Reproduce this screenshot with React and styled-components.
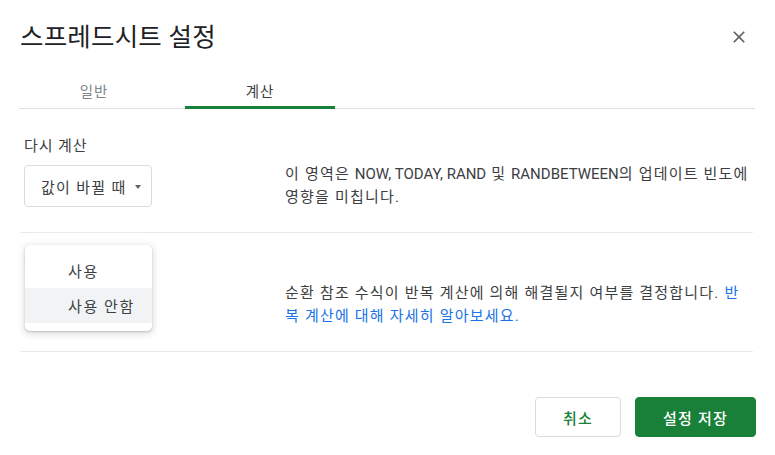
import React from "react";
import styled, { createGlobalStyle } from "styled-components";

const GlobalStyle = createGlobalStyle`
  html, body {
    margin: 0;
    padding: 0;
    background: #ffffff;
  }
  body {
    font-family: Roboto, "Noto Sans CJK KR", "Noto Sans", sans-serif;
    color: #3c4043;
  }
  * { box-sizing: border-box; }
`;

const Dialog = styled.div`
  width: 775px;
  height: 455px;
  padding: 0 20px;
  background: #fff;
  overflow: hidden;
`;

const Header = styled.div`
  height: 73px;
  display: flex;
  align-items: center;
  justify-content: space-between;
`;

const Title = styled.h1`
  margin: 0;
  font-size: 25.5px;
  line-height: 30px;
  letter-spacing: 0.2px;
  font-weight: 400;
  color: #202124;
`;

const CloseButton = styled.button`
  width: 20px;
  height: 20px;
  padding: 0;
  margin-right: 6px;
  border: 0;
  background: transparent;
  color: #5f6368;
  display: flex;
  align-items: center;
  justify-content: center;
  cursor: pointer;
`;

const TabBar = styled.div`
  display: flex;
  gap: 16px;
  margin-left: -1px;
  border-bottom: 1px solid #e0e0e0;
`;

const Tab = styled.div`
  width: 150px;
  height: 36px;
  margin-bottom: -1px;
  display: flex;
  align-items: center;
  justify-content: center;
  font-size: 14.5px;
  letter-spacing: 0.8px;
  color: ${(p) => (p.$active ? "#3c4043" : "#80868b")};
  border-bottom: 3px solid ${(p) => (p.$active ? "#188038" : "transparent")};
  padding-top: 1px;
`;

const Panel = styled.div`
  padding-top: 5px;
`;

const Section = styled.div`
  display: grid;
  grid-template-columns: 240px 1fr;
  grid-template-rows: 20px 42px;
  column-gap: 21px;
  row-gap: 9px;
  padding: 22px 0 25px 4px;
  margin-right: 2px;
  border-bottom: 1px solid #e8eaed;
`;

const Label = styled.div`
  grid-column: 1;
  font-size: 15px;
  line-height: 20px;
  letter-spacing: 0.9px;
  color: #3c4043;
  white-space: nowrap;
`;

const SelectWrap = styled.div`
  grid-column: 1;
  grid-row: 2;
  position: relative;
`;

const Select = styled.div`
  width: 128px;
  height: 42px;
  display: flex;
  align-items: center;
  justify-content: space-between;
  padding: 0 10px 0 16px;
  border: 1px solid #dadce0;
  border-radius: 4px;
  font-size: 15px;
  letter-spacing: 1.3px;
  color: #3c4043;
  white-space: nowrap;
  visibility: ${(p) => (p.$hidden ? "hidden" : "visible")};
`;

const Caret = styled.span`
  width: 0;
  height: 0;
  border-left: 3.5px solid transparent;
  border-right: 3.5px solid transparent;
  border-top: 4px solid #5f6368;
  margin-top: 1px;
`;

const Description = styled.div`
  grid-column: 2;
  grid-row: 2;
  align-self: center;
  margin-right: -1px;
  font-size: 15px;
  line-height: 23px;
  letter-spacing: 1.2px;
  color: #3c4043;
`;

const FnName = styled.span`
  letter-spacing: 0;
`;

const Link = styled.a`
  color: #1a73e8;
  text-decoration: none;
`;

const Menu = styled.div`
  position: absolute;
  top: -39px;
  left: 1px;
  width: 127px;
  padding: 8px 0;
  background: #fff;
  border-radius: 5px;
  box-shadow: 0 1px 2px rgba(60, 64, 67, 0.25), 0 2px 6px 2px rgba(60, 64, 67, 0.13);
  z-index: 2;
`;

const MenuItem = styled.div`
  height: 35px;
  display: flex;
  align-items: center;
  padding-left: 43px;
  font-size: 15px;
  letter-spacing: 1.6px;
  color: #3c4043;
  background: ${(p) => (p.$highlight ? "#f1f3f4" : "transparent")};
`;

const Footer = styled.div`
  display: flex;
  justify-content: flex-end;
  gap: 14px;
  padding-top: 45px;
  margin-right: -1px;
`;

const Button = styled.button`
  height: 40px;
  width: ${(p) => (p.$primary ? "121px" : "86px")};
  border-radius: 4px;
  font-family: inherit;
  font-size: 15px;
  font-weight: 500;
  letter-spacing: 1.2px;
  cursor: pointer;
  border: 1px solid ${(p) => (p.$primary ? "#188038" : "#dadce0")};
  background: ${(p) => (p.$primary ? "#188038" : "#ffffff")};
  color: ${(p) => (p.$primary ? "#ffffff" : "#188038")};
`;

function CloseIcon() {
  return (
    <svg width="20" height="20" viewBox="0 0 24 24" fill="currentColor">
      <path d="M19 6.41L17.59 5 12 10.59 6.41 5 5 6.41 10.59 12 5 17.59 6.41 19 12 13.41 17.59 19 19 17.59 13.41 12z" />
    </svg>
  );
}

export default function App() {
  return (
    <>
      <GlobalStyle />
      <Dialog>
        <Header>
          <Title>스프레드시트 설정</Title>
          <CloseButton aria-label="닫기">
            <CloseIcon />
          </CloseButton>
        </Header>
        <TabBar>
          <Tab>일반</Tab>
          <Tab $active>계산</Tab>
        </TabBar>
        <Panel>
          <Section>
            <Label>다시 계산</Label>
            <SelectWrap>
              <Select>
                값이 바뀔 때
                <Caret />
              </Select>
            </SelectWrap>
            <Description>
              이 영역은 <FnName>NOW, TODAY, RAND</FnName> 및 <FnName>RANDBETWEEN</FnName>의 업데이트 빈도에 영향을 미칩니다.
            </Description>
          </Section>
          <Section>
            <Label>반복 계산</Label>
            <SelectWrap>
              <Select $hidden>
                사용 안함
                <Caret />
              </Select>
              <Menu>
                <MenuItem>사용</MenuItem>
                <MenuItem $highlight>사용 안함</MenuItem>
              </Menu>
            </SelectWrap>
            <Description>
              순환 참조 수식이 반복 계산에 의해 해결될지 여부를 결정합니다.{" "}
              <Link href="#">반복 계산에 대해 자세히 알아보세요.</Link>
            </Description>
          </Section>
        </Panel>
        <Footer>
          <Button>취소</Button>
          <Button $primary>설정 저장</Button>
        </Footer>
      </Dialog>
    </>
  );
}
